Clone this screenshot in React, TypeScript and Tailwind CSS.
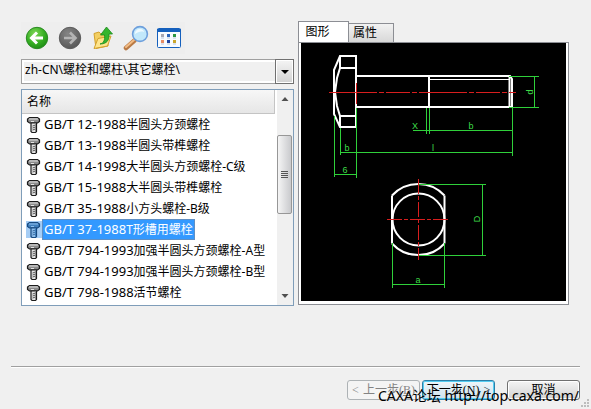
import React, { useState } from "react";

type Standard = { code: string; name: string };

const standards: Standard[] = [
  { code: "GB/T 12-1988", name: "半圆头方颈螺栓" },
  { code: "GB/T 13-1988", name: "半圆头带榫螺栓" },
  { code: "GB/T 14-1998", name: "大半圆头方颈螺栓-C级" },
  { code: "GB/T 15-1988", name: "大半圆头带榫螺栓" },
  { code: "GB/T 35-1988", name: "小方头螺栓-B级" },
  { code: "GB/T 37-1988", name: "T形槽用螺栓" },
  { code: "GB/T 794-1993", name: "加强半圆头方颈螺栓-A型" },
  { code: "GB/T 794-1993", name: "加强半圆头方颈螺栓-B型" },
  { code: "GB/T 798-1988", name: "活节螺栓" },
];

function BackIcon() {
  return (
    <svg width="24" height="24" viewBox="0 0 24 24" aria-hidden="true">
      <defs>
        <radialGradient id="green" cx="0.4" cy="0.3" r="0.75">
          <stop offset="0" stopColor="#7fd657" />
          <stop offset="0.6" stopColor="#35ae22" />
          <stop offset="1" stopColor="#1c8a14" />
        </radialGradient>
      </defs>
      <circle cx="12" cy="12" r="10.7" fill="url(#green)" stroke="#2a8a22" />
      <path d="M18 12H7M12 6.5 6.5 12l5.500 5.500" fill="none" stroke="#fff" strokeWidth="3" />
    </svg>
  );
}

function ForwardIcon() {
  return (
    <svg width="24" height="24" viewBox="0 0 24 24" aria-hidden="true">
      <defs>
        <radialGradient id="grey" cx="0.4" cy="0.3" r="0.75">
          <stop offset="0" stopColor="#858585" />
          <stop offset="1" stopColor="#555" />
        </radialGradient>
      </defs>
      <circle cx="12" cy="12" r="10.7" fill="url(#grey)" stroke="#5c5c5c" />
      <path d="M6 12h11M12 6.5l5.500 5.500-5.500 5.500" fill="none" stroke="#b4b4b4" strokeWidth="2.600" />
    </svg>
  );
}

function FolderUpIcon() {
  return (
    <svg width="24" height="24" viewBox="0 0 24 24" aria-hidden="true">
      <path d="M3 7.500l5-1.500 2 2 6-1 1 13-12 2.500z" fill="#f3cf62" stroke="#d3a12c" />
      <path d="M3 22.500 7 12.500l13-2.500-3.500 10z" fill="#ffe58c" stroke="#d3a12c" />
      <path d="M9 18c4-1 5-4 4.500-9H9.500l6-8 6 7H18c.5 6-2 10-9 10z" fill="#35b52d" stroke="#178a1b" strokeWidth="0.800" />
    </svg>
  );
}

function SearchIcon() {
  return (
    <svg width="26" height="26" viewBox="0 0 26 26" aria-hidden="true">
      <path d="M3 23l8.500-7.500" stroke="#b97a45" strokeWidth="4.500" strokeLinecap="round" />
      <path d="M3 22l8-7" stroke="#f2bc85" strokeWidth="2" strokeLinecap="round" />
      <circle cx="17" cy="9" r="7.400" fill="#c2e8fb" stroke="#6d9fdc" strokeWidth="1.600" />
      <path d="M12 9c0-3 2-5 5-5 3 0 4 2 4 3-3-1-6 0-9 2z" fill="#effaff" />
    </svg>
  );
}

function ViewIcon() {
  return (
    <svg width="24" height="20" viewBox="0 0 24 20" aria-hidden="true">
      <rect x="0.500" y="0.500" width="23" height="19" rx="1" fill="#f8fbff" stroke="#1560bd" />
      <path d="M0 1h24v3H0z" fill="#1560bd" />
      <path d="M4 6h3v3H4z" fill="#a8a8b2" />
      <path d="M10 6h3v3h-3z" fill="#2e67bd" />
      <path d="M16 6h3v3h-3z" fill="#2b9644" />
      <path d="M4 12h3v3H4z" fill="#e98d64" />
      <path d="M10 12h3v3h-3z" fill="#2346a0" />
      <path d="M16 12h3v3h-3z" fill="#caa62d" />
      <path d="M4 10h3M10 10h3M16 10h3M4 16h3M10 16h3M16 16h3" stroke="#b9c8de" />
    </svg>
  );
}

function BoltIcon({ selected }: { selected: boolean }) {
  const line = selected ? "#17497f" : "#1c1c1c";
  const fill = selected ? "#3f7fbd" : "#8b8b8b";
  const light = selected ? "#8fc0ee" : "#e4e4e4";
  return (
    <svg width="16" height="18" viewBox="0 0 16 18" aria-hidden="true">
      <path d="M3.500 1.500h8l2 1.500v2.500l-2 1.500h-8l-2-1.500V3z" fill={fill} stroke={line} strokeWidth="1.200" />
      <path d="M3 3h9M5 5.500h3" stroke={light} />
      <path d="M5 7h5.500v8.500l-1 1H6l-1-1z" fill={light} stroke={line} strokeWidth="1.200" />
      <path d="M6.500 10l3-1M6.500 12l3-1M6.500 14l3-1" stroke={line} strokeWidth="0.700" />
      <path d="M9.500 7.500v8" stroke={fill} />
    </svg>
  );
}

function Drawing() {
  return (
    <svg
      viewBox="301 43 265 258"
      className="block h-[258px] w-full bg-black"
      role="img"
      aria-label="T形槽用螺栓"
    >
      <g fill="none" stroke="#fff" strokeWidth="2">
        <path d="M340 56h16v71h-16l-6-13V70z" />
        <path d="M340 56v12h16M356 116h-16v11" />
        <path d="M340 68l-3 10-2 14 2 14 3 10" />
        <path d="M356 76h154l2 3v28H356M429 76v31" />
        <path d="M509.500 77v30" />
        <path d="M429 79.500h80" strokeWidth="1" />
        <path d="M392 195.500v48M444.500 195.500v48" />
        <path d="M392 195.500a35.500 35.500 0 0 1 52.500 0M392 243.500a35.500 35.500 0 0 0 52.500 0" />
        <circle cx="418.500" cy="219.500" r="26" />
      </g>
      <g fill="none" stroke="#2fd03a" strokeWidth="1">
        <path d="M334.500 116v61M340.500 128v27M356.500 108v70" />
        <path d="M340 152.500h172M334 174.500h22M413 130.500h99" />
        <path d="M426.500 108v26M429.500 108v26M512.500 107v49" />
        <path d="M509 76.500h30M509 107.500h30M534.500 76v31" />
        <path d="M418 184.500h68M418 255.500h68M482.500 184v71" />
        <path d="M392.500 243v45M444.500 243v45M392 284.500h52" />
      </g>
      <g fill="none" stroke="#d81e1e" strokeWidth="1">
        <path d="M329 92.500h187" strokeDasharray="48 2 5 2 24 2 5 2" />
        <path d="M356.500 83v21" />
        <path d="M387 219.500h63M418.500 179v81" strokeDasharray="15 2 4 2" />
      </g>
      <g
        fill="#3ddc48"
        fontSize="9"
        textAnchor="middle"
        fontFamily="'Liberation Sans Narrow','Liberation Sans',sans-serif"
      >
        <text x="347" y="151">b</text>
        <text x="433" y="151">l</text>
        <text x="345" y="173">6</text>
        <text x="415" y="129">X</text>
        <text x="471" y="129">b</text>
        <text x="418" y="283">a</text>
        <text transform="translate(533 92) rotate(-90)">d</text>
        <text transform="translate(480 219) rotate(-90)">D</text>
      </g>
    </svg>
  );
}

const tools = [
  { label: "后退", icon: <BackIcon /> },
  { label: "前进", icon: <ForwardIcon /> },
  { label: "向上", icon: <FolderUpIcon /> },
  { label: "查找", icon: <SearchIcon /> },
  { label: "视图", icon: <ViewIcon /> },
];

function Toolbar() {
  return (
    <div className="flex h-8 w-[164px] bg-[#eeeeee]">
      {tools.map((tool) => (
        <button key={tool.label} type="button" aria-label={tool.label} className="flex w-[33px] items-center justify-center">
          {tool.icon}
        </button>
      ))}
    </div>
  );
}

function PathSelect() {
  return (
    <div className="relative mt-[5px] h-[25px]">
      <select
        aria-label="路径"
        className="block h-full w-full appearance-none border border-[#a0a0a0] bg-[#f0f0f0] pr-6 pb-1 pl-[3px] text-[12px] leading-4 text-black shadow-[inset_0_0_0_2px_white]"
      >
        <option>zh-CN\螺栓和螺柱\其它螺栓\</option>
      </select>
      <span className="pointer-events-none absolute inset-y-0 right-0 flex w-[19px] items-center justify-center border border-[#707070] bg-linear-to-b from-[#f4f4f4] to-[#d2d2d2] shadow-[inset_0_0_0_1px_white]">
        <svg width="8" height="4" viewBox="0 0 8 4" aria-hidden="true">
          <path d="M0 0h8L4 4z" fill="#000" />
        </svg>
      </span>
    </div>
  );
}

function Scrollbar() {
  return (
    <div className="flex w-4 flex-col items-center bg-[#f0f0f0]" aria-hidden="true">
      <svg width="16" height="17" viewBox="0 0 16 17">
        <path d="M4.500 11h7L8 7z" fill="#505050" />
      </svg>
      <div className="mt-7 mr-px flex h-[79px] w-[15px] flex-col items-center justify-center gap-px rounded-[2px] border border-[#979797] bg-linear-to-r from-[#f5f5f5] to-[#c9cacd]">
        <span className="h-px w-[7px] bg-[#555]" />
        <span className="h-px w-[7px] bg-[#555]" />
        <span className="h-px w-[7px] bg-[#555]" />
        <span className="h-px w-[7px] bg-[#555]" />
      </div>
      <div className="flex-1" />
      <svg width="16" height="17" viewBox="0 0 16 17">
        <path d="M4.500 6h7L8 10z" fill="#505050" />
      </svg>
    </div>
  );
}

function StandardList() {
  const [selected, setSelected] = useState(5);
  return (
    <div className="mt-[5px] flex border border-[#7f9db9] bg-white">
      <div className="min-w-0 flex-1">
        <div className="mr-[2px] h-6 border-r border-b border-[#c4c4c4] bg-linear-to-b from-[#f7f7f7] to-[#e6e6e6] pl-[5px] text-[12px] leading-6">
          名称
        </div>
        <ul className="pb-[2px]">
          {standards.map((item, index) => {
            const active = index === selected;
            return (
              <li key={index} className="h-[21px] pl-1">
                <button
                  type="button"
                  aria-pressed={active}
                  onClick={() => setSelected(index)}
                  className="flex h-[21px] items-center whitespace-nowrap"
                >
                  <span className={active ? "flex h-[17px] w-4 items-center bg-[#a5cdf5]" : "flex w-4 items-center"}>
                    <BoltIcon selected={active} />
                  </span>
                  <span
                    className={
                      active
                        ? "h-[21px] border border-[#5f8fc4] bg-[#3399ff] px-px text-[12px] leading-[18px] text-white"
                        : "h-[21px] border border-transparent px-px text-[12px] leading-[18px] text-black"
                    }
                  >
                    <span className="text-[13px]">{item.code}</span>
                    {item.name}
                  </span>
                </button>
              </li>
            );
          })}
        </ul>
      </div>
      <Scrollbar />
    </div>
  );
}

export default function App() {
  return (
    <div className="flex min-h-screen flex-col bg-[#f0f0f0] font-['Noto_Sans','Noto_Sans_CJK_SC',sans-serif] text-[12px] text-black">
      <main className="grid grid-cols-[273fr_271fr] gap-1 pt-[21px] pr-[22px] pl-[21px]">
        <section className="pt-px">
          <Toolbar />
          <PathSelect />
          <StandardList />
        </section>
        <section className="flex flex-col">
          <div role="tablist" className="flex h-[21px] items-end">
            <button
              type="button"
              role="tab"
              aria-selected="true"
              className="h-[21px] w-[51px] border border-b-0 border-[#8c8e94] bg-white pr-3 leading-[18px]"
            >
              图形
            </button>
            <button
              type="button"
              role="tab"
              aria-selected="false"
              className="h-[19px] w-[45px] border border-b-0 border-l-0 border-[#8c8e94] bg-linear-to-b from-[#f2f2f2] to-[#d8d8d8] pr-3 leading-[18px]"
            >
              属性
            </button>
          </div>
          <div className="border border-[#8c8e94] bg-white px-[2px] pb-[3px]">
            <Drawing />
          </div>
        </section>
      </main>

      <hr className="mx-[11px] mt-[60px] border-t border-b border-t-[#a0a0a0] border-b-white" />

      <footer className="relative flex justify-end pt-3 pr-[11px] pb-[10px] font-['Liberation_Serif','Noto_Sans_CJK_SC',serif]">
        <button
          type="button"
          disabled
          className="flex h-5 w-[73px] items-center justify-center gap-1 rounded-[3px] border border-[#adb2b5] bg-[#f4f4f4] leading-[16px] whitespace-nowrap text-[#838383]"
        >
          <span>&lt;</span>
          <span>
            上一步(<u>B</u>)
          </span>
        </button>
        <button
          type="button"
          className="ml-[2px] flex h-5 w-[73px] items-center justify-center gap-1 rounded-[3px] border border-[#2c7fa8] bg-linear-to-b from-[#eef6fa] to-[#cfe3ee] leading-[16px] whitespace-nowrap shadow-[inset_0_0_0_1px_#55cdf2]"
        >
          <span>
            下一步(<u>N</u>)
          </span>
          <span>&gt;</span>
        </button>
        <button
          type="button"
          className="ml-3 h-5 w-[73px] rounded-[3px] border border-[#707070] bg-linear-to-b from-[#f4f4f4] to-[#d3d3d3] leading-[16px] shadow-[inset_0_0_0_1px_white]"
        >
          取消
        </button>
        <span className="pointer-events-none absolute right-3 bottom-1 font-['Noto_Sans','Noto_Sans_CJK_SC',sans-serif] text-[14px] leading-5 whitespace-nowrap">
          CAXA论坛 http://top.caxa.com/
        </span>
        <svg className="absolute right-0 bottom-0" width="12" height="12" viewBox="0 0 12 12" aria-hidden="true">
          <path d="M8 1h2v2H8zM5 4h2v2H5zM8 4h2v2H8zM2 7h2v2H2zM5 7h2v2H5zM8 7h2v2H8z" fill="#bdbdbd" />
        </svg>
      </footer>
    </div>
  );
}
